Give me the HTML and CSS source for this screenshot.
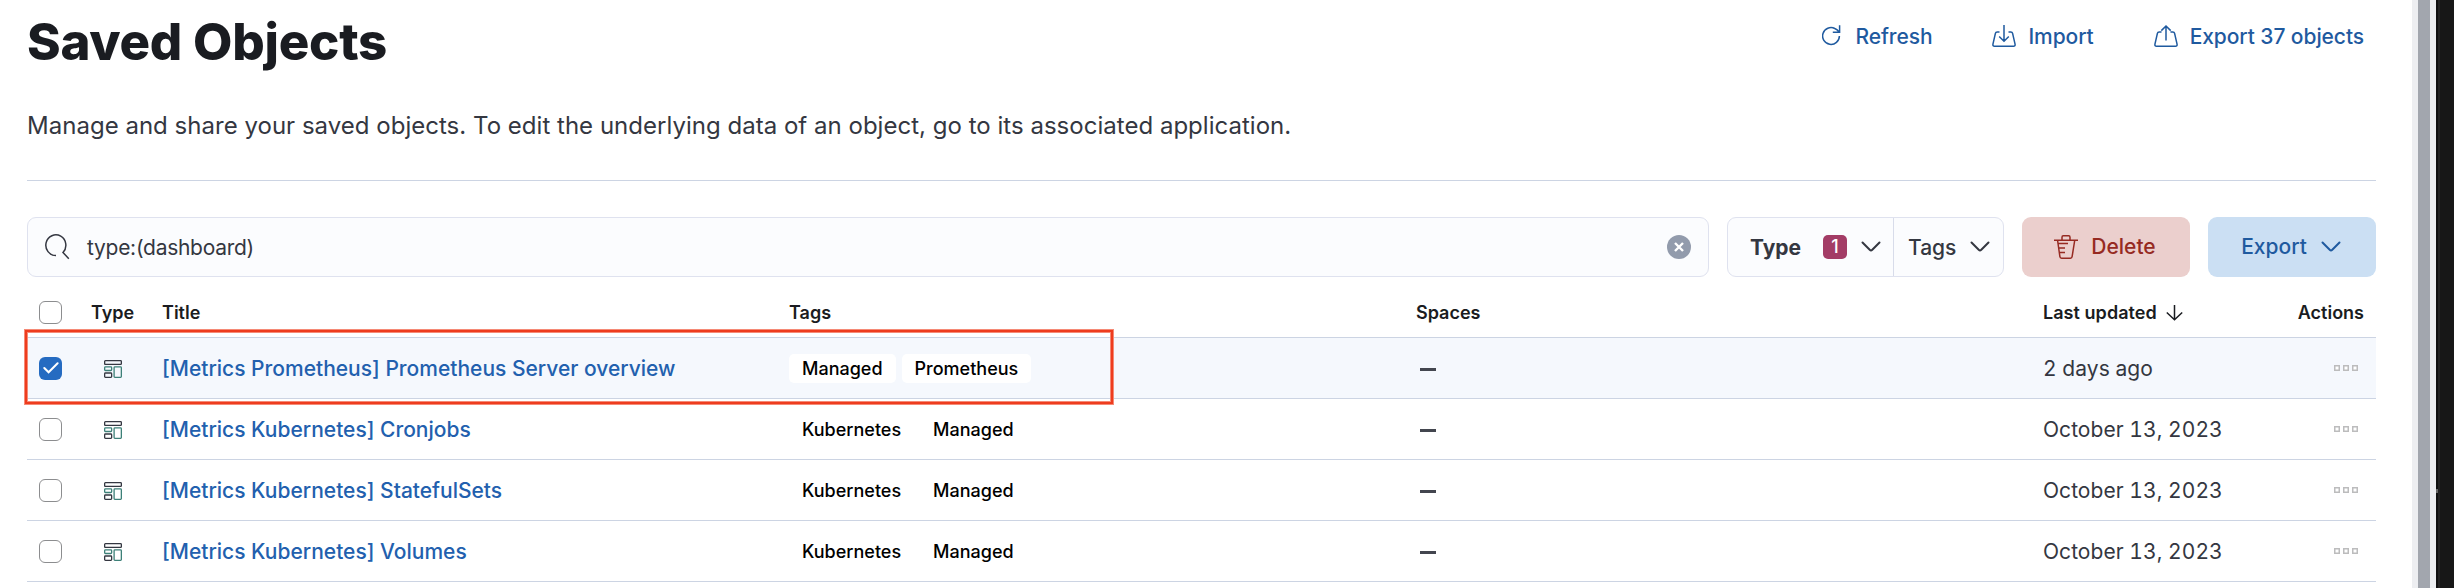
FILE: index.html
```html
<!DOCTYPE html>
<html lang="en">
<head>
<meta charset="utf-8">
<title>Saved Objects</title>
<link rel="stylesheet" href="styles.css">
</head>
<body>
<svg class="sprite" width="0" height="0">
  <symbol id="dashboard" viewBox="0 0 18 18">
    <rect x=".65" y=".65" width="16.7" height="3.8" rx=".8" fill="none" stroke="#343741" stroke-width="1.3"/>
    <rect x=".65" y="6.9" width="7" height="3.6" rx=".8" fill="none" stroke="#3d8078" stroke-width="1.3"/>
    <rect x="10.1" y="6.9" width="7.25" height="10.4" rx=".8" fill="none" stroke="#3d8078" stroke-width="1.3"/>
    <rect x=".65" y="13" width="7" height="4.3" rx=".8" fill="none" stroke="#343741" stroke-width="1.3"/>
  </symbol>
  <symbol id="dots" viewBox="0 0 24 6">
    <g fill="#fff" stroke="#bcbcbd" stroke-width="1.5"><rect x=".75" y=".75" width="4.5" height="4.5"/><rect x="9.75" y=".75" width="4.5" height="4.5"/><rect x="18.75" y=".75" width="4.5" height="4.5"/></g>
  </symbol>
  <symbol id="chevron" viewBox="0 0 20 12"><path d="M1.5 1.5 8.7 8.8Q10 10 11.3 8.8L18.5 1.5" fill="none" stroke="currentColor" stroke-width="2" stroke-linecap="round"/></symbol>
</svg>
<div class="screen">
  <main class="page">
    <header class="head">
      <h1 class="title">Saved Objects</h1>
      <nav class="actions">
        <a class="action refresh"><svg width="20" height="24" viewBox="0 0 20 24"><path d="M17.4 12A8.4 8.4 0 1 1 12.8 4.5Q15.3 5.6 17.2 8M17.6 1.2V8.2H10.8" fill="none" stroke="currentColor" stroke-width="1.5"/></svg><span>Refresh</span></a>
        <a class="action import"><svg width="24" height="24" viewBox="0 0 24 24"><path d="M7.5 8H5.2Q3.7 8 3.4 9.4L.9 20.3Q.7 22.3 2.5 22.3H21.5Q23.3 22.3 23.1 20.3L20.6 9.4Q20.3 8 18.8 8H16.5M12 1V17M7.2 12.5 12 17.2 16.8 12.5" fill="none" stroke="currentColor" stroke-width="1.5"/></svg><span>Import</span></a>
        <a class="action"><svg width="24" height="24" viewBox="0 0 24 24"><path d="M7.5 8H5.2Q3.7 8 3.4 9.4L.9 20.3Q.7 22.3 2.5 22.3H21.5Q23.3 22.3 23.1 20.3L20.6 9.4Q20.3 8 18.8 8H16.5M12 16.5V2M7.3 6.6 12 2 16.7 6.6" fill="none" stroke="currentColor" stroke-width="1.5"/></svg><span>Export 37 objects</span></a>
      </nav>
    </header>
    <p class="lead"><span>Manage and share your saved objects. To edit the underlying data of an object, go to its associated application.</span></p>
    <div class="toolbar">
      <div class="search">
        <svg width="26" height="26" viewBox="0 0 26 26"><path d="M12 21.5A10 10.3 0 1 1 19 18.4L24.8 24.8" fill="none" stroke="#343741" stroke-width="1.5"/></svg>
        <span class="query">type:(dashboard)</span>
        <svg class="clear" width="24" height="24" viewBox="0 0 24 24"><circle cx="12" cy="12" r="12" fill="#929bac"/><path d="M8 8 16 16M16 8 8 16" stroke="#fff" stroke-width="2.4"/></svg>
      </div>
      <div class="filters">
        <div class="filter type"><b>Type</b><span class="count">1</span><svg width="20" height="12"><use href="#chevron"/></svg></div>
        <div class="filter tagf"><span>Tags</span><svg width="20" height="12"><use href="#chevron"/></svg></div>
      </div>
      <div class="btn delete"><svg width="24" height="24" viewBox="0 0 24 24"><path d="M0 5.3H24M8 5V2.2Q8 .8 9.3 .8H14.7Q16 .8 16 2.2V5M3.6 5.5 5.9 21.7Q6.1 23.2 7.6 23.2H16.4Q17.9 23.2 18.1 21.7L20.7 5.5M4.5 8.5H14M5 13H11M5.5 17.5H11" fill="none" stroke="currentColor" stroke-width="1.5"/></svg><span>Delete</span></div>
      <div class="btn export"><span>Export</span><svg width="20" height="12"><use href="#chevron"/></svg></div>
    </div>
    <section class="table">
      <div class="row thead"><i class="check"></i><span>Type</span><span>Title</span><span>Tags</span><span>Spaces</span><span class="sort">Last updated<svg width="17" height="16" viewBox="0 0 17 16"><path d="M8.5 0V14.6M.8 7.5 8.5 14.8 16.2 7.5" fill="none" stroke="currentColor" stroke-width="1.5"/></svg></span><span class="right">Actions</span></div>
      <div class="row selected"><i class="check on"><svg width="16" height="12" viewBox="0 0 16 12"><path d="M1.3 6 5.6 10.3 14.6 1.3" fill="none" stroke="#fff" stroke-width="2" stroke-linecap="round"/></svg></i><svg class="kind" width="18" height="18"><use href="#dashboard"/></svg><a>[Metrics Prometheus] Prometheus Server overview</a><div class="tags"><span>Managed</span><span>Prometheus</span></div><b class="dash"></b><span class="date">2 days ago</span><svg class="more" width="24" height="6"><use href="#dots"/></svg></div>
      <div class="row"><i class="check"></i><svg class="kind" width="18" height="18"><use href="#dashboard"/></svg><a>[Metrics Kubernetes] Cronjobs</a><div class="tags"><span>Kubernetes</span><span>Managed</span></div><b class="dash"></b><span class="date">October 13, 2023</span><svg class="more" width="24" height="6"><use href="#dots"/></svg></div>
      <div class="row"><i class="check"></i><svg class="kind" width="18" height="18"><use href="#dashboard"/></svg><a>[Metrics Kubernetes] StatefulSets</a><div class="tags"><span>Kubernetes</span><span>Managed</span></div><b class="dash"></b><span class="date">October 13, 2023</span><svg class="more" width="24" height="6"><use href="#dots"/></svg></div>
      <div class="row"><i class="check"></i><svg class="kind" width="18" height="18"><use href="#dashboard"/></svg><a>[Metrics Kubernetes] Volumes</a><div class="tags"><span>Kubernetes</span><span>Managed</span></div><b class="dash"></b><span class="date">October 13, 2023</span><svg class="more" width="24" height="6"><use href="#dots"/></svg></div>
      <div class="highlight"></div>
    </section>
  </main>
  <aside class="scrollbar"><div class="thumb"></div></aside>
  <aside class="edge"><i class="speck"></i></aside>
</div>
</body>
</html>
```
FILE: styles.css
```css
* { box-sizing: border-box; }
body { margin: 0; font-family: Inter, "Noto Sans", sans-serif; font-size: 21px; color: #343741; background: #fff; }
.sprite { position: absolute; }
.screen { display: flex; width: 2454px; height: 588px; overflow: hidden; }
.page { width: 2412px; padding: 0 36px 0 27px; }
.head { display: flex; justify-content: space-between; height: 84px; }
.title { margin: 10px 0 0; font-size: 51px; line-height: 63px; font-weight: 800; color: #1a1c21; letter-spacing: -0.25px; white-space: nowrap; }
.actions { display: flex; height: 72px; align-items: center; padding-right: 12px; color: #1f5a9f; font-weight: 500; }
.action { display: flex; align-items: center; gap: 12px; letter-spacing: -0.08px; white-space: nowrap; }
.refresh { margin-right: 60px; }
.refresh svg { margin-right: 1px; }
.import { margin-right: 60px; }
.lead { margin: 0; height: 97px; padding-top: 24px; border-bottom: 1px solid #ccd4e3; font-size: 24px; line-height: 36px; letter-spacing: 0.02px; white-space: nowrap; }
.toolbar { display: flex; margin-top: 36px; height: 60px; }
.search { width: 1682px; display: flex; align-items: center; padding: 0 17px 0 16px; border: 1px solid #dfe2ef; border-radius: 9px; background: #fbfcfe; }
.query { margin-left: 17px; flex: 1; letter-spacing: -0.27px; }
.filters { display: flex; width: 277px; margin-left: 18px; border: 1px solid #dfe2ef; border-radius: 9px; background: #fbfcfe; }
.filter { display: flex; align-items: center; }
.type { width: 166px; padding-left: 22px; border-right: 1px solid #d8dcea; }
.count { width: 24px; height: 24px; margin: 0 14px 0 22px; border-radius: 5px; background: #a33c66; color: #fff; font-size: 18px; line-height: 24px; font-weight: 500; text-align: center; }
.tagf { padding-left: 14px; gap: 14px; font-weight: 500; }
.btn { width: 168px; margin-left: 18px; padding: 0 2px 1px 0; display: flex; align-items: center; justify-content: center; border-radius: 9px; font-weight: 500; }
.delete { background: #ebcfcd; color: #962a22; gap: 13px; }
.export { background: #cbdff3; color: #1f5a9f; gap: 14px; }
.table { position: relative; }
.row { display: grid; grid-template-columns: 64px 71px 627px 627px 627px 200px 1fr; align-items: center; height: 61px; border-bottom: 1px solid #ccd4e3; white-space: nowrap; }
.thead { height: 61px; padding-top: 11px; font-size: 18px; line-height: 24px; font-weight: 600; color: #1a1c21; }
.sort { display: flex; align-items: center; gap: 9px; letter-spacing: 0.05px; }
.right { text-align: right; padding-right: 12px; }
.selected { background: #f5f8fd; }
.check { width: 23px; height: 23px; margin-left: 12px; border: 1px solid #8c8d8f; border-radius: 6px; background: #fff; display: flex; align-items: center; justify-content: center; }
.on { border: 0; background: #256bc1; }
.kind { margin: 2px 0 0 13px; }
.row a { color: #2260ae; font-weight: 500; }
.tags { display: flex; gap: 6px; font-size: 18px; font-weight: 500; color: #000; }
.tags span { padding: 0 13px; height: 29px; line-height: 29px; border-radius: 5px; background: #fff; }
.dash { width: 16px; height: 3px; background: #43464f; margin: 3px 0 0 4px; }
.date { font-variant-numeric: tabular-nums; letter-spacing: 0.05px; }
.more { justify-self: end; margin-right: 18px; }
.highlight { position: absolute; left: -2px; top: 53px; width: 1088px; height: 74px; border: 2px solid #ee3c1e; box-shadow: 0 0 0 1px #f58a76, inset 0 0 0 1px #f58a76; }
.scrollbar { width: 24px; padding: 0 6px; background: #edeef1; }
.thumb { height: 100%; background: #a2a6ae; }
.edge { flex: 1; padding-top: 489px; background: linear-gradient(90deg, #101010 2px, #222 2px, #222 4px, #171717 4px); }
.speck { display: block; width: 2px; height: 4px; background: #666; }
```
